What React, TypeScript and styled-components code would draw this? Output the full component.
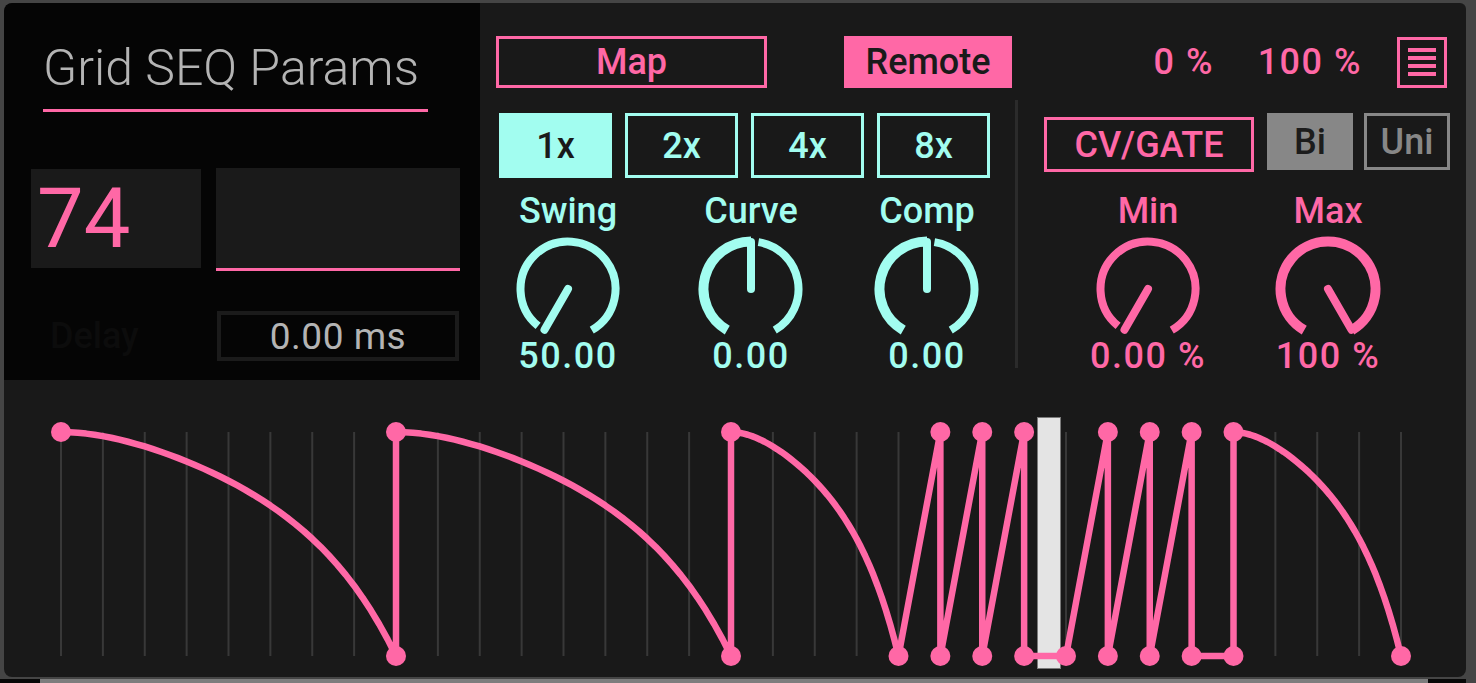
import styled, { createGlobalStyle } from 'styled-components'

const PINK = '#ff68a6'
const CYAN = '#a2fdf0'
const GREY = '#b4b4b4'
const PANEL = '#191919'

const GlobalStyle = createGlobalStyle`
  html, body {
    margin: 0;
    padding: 0;
    background: #454545;
  }
  body {
    font-family: Roboto, 'Liberation Sans', sans-serif;
  }
`

const Frame = styled.div`
  width: 1476px;
  height: 683px;
  overflow: hidden;
  padding-top: 3px;
  box-sizing: border-box;
  display: flex;
  flex-direction: column;
`

const Device = styled.div`
  margin-left: 4px;
  width: 1462px;
  height: 674px;
  background: ${PANEL};
  border-radius: 8px 6px 8px 8px;
  overflow: hidden;
  display: flex;
  flex-direction: column;
`

const TopRow = styled.div`
  display: flex;
  height: 377px;
`

/* ---------- left info panel ---------- */

const InfoPanel = styled.div`
  width: 476px;
  background: #050505;
  border-radius: 8px 0 0 0;
  box-sizing: border-box;
  padding: 37px 0 0 27px;
  display: flex;
  flex-direction: column;
`

const Title = styled.div`
  margin-left: 12px;
  font-weight: 300;
  font-size: 50px;
  line-height: 56px;
  color: ${GREY};
  white-space: nowrap;
`

const TitleRule = styled.div`
  margin: 13px 0 0 12px;
  width: 385px;
  height: 3px;
  background: ${PINK};
`

const ValueRow = styled.div`
  display: flex;
  align-items: flex-start;
  gap: 15px;
  margin-top: 56px;
`

const NumberBox = styled.div`
  margin-top: 1px;
  width: 170px;
  height: 99px;
  background: #1a1a1a;
  box-sizing: border-box;
  padding-left: 6px;
  color: ${PINK};
  font-size: 83px;
  line-height: 99px;
`

const LevelBox = styled.div`
  width: 244px;
  height: 100px;
  background: #1a1a1a;
  border-bottom: 3px solid ${PINK};
`

const DelayRow = styled.div`
  display: flex;
  align-items: center;
  margin-top: 40px;
`

const DelayLabel = styled.div`
  width: 186px;
  box-sizing: border-box;
  padding-left: 19px;
  font-size: 36px;
  font-weight: 500;
  color: #0c0c0c;
`

const TimeBox = styled.div`
  width: 242px;
  height: 50px;
  box-sizing: border-box;
  border: 4px solid #1b1b1b;
  background: #050505;
  display: flex;
  align-items: center;
  justify-content: center;
  font-size: 37px;
  letter-spacing: 0.5px;
  color: ${GREY};
`

/* ---------- controls ---------- */

const ControlsPanel = styled.div`
  flex: 1;
  display: flex;
  flex-direction: column;
`

const Header = styled.div`
  display: flex;
  align-items: center;
  margin-top: 33px;
  padding-left: 16px;
  height: 52px;
`

const Toggle = styled.div<{ $color: string; $on?: boolean; $w: number; $h: number; $text?: string }>`
  width: ${(p) => p.$w}px;
  height: ${(p) => p.$h}px;
  box-sizing: border-box;
  border: 3px solid ${(p) => p.$color};
  background: ${(p) => (p.$on ? p.$color : 'transparent')};
  color: ${(p) => p.$text ?? (p.$on ? '#1a1a1a' : p.$color)};
  display: flex;
  align-items: center;
  justify-content: center;
  font-size: 36px;
  font-weight: 500;
  flex-shrink: 0;
`

const Readout = styled.div<{ $w: number }>`
  width: ${(p) => p.$w}px;
  text-align: right;
  font-size: 36px;
  font-weight: 500;
  letter-spacing: 1.5px;
  color: ${PINK};
  flex-shrink: 0;
`

const MenuButton = styled.div`
  margin-left: 35px;
  width: 50px;
  height: 51px;
  box-sizing: border-box;
  border: 3px solid ${PINK};
  display: flex;
  flex-direction: column;
  align-items: center;
  justify-content: center;
  gap: 3.7px;
`

const MenuBar = styled.span`
  width: 28px;
  height: 4px;
  background: ${PINK};
`

const Body = styled.div`
  display: flex;
  margin-top: 12px;
  height: 268px;
`

const LeftColumn = styled.div`
  width: 535px;
  padding-top: 13px;
`

const Divider = styled.div`
  width: 3px;
  background: #2b2b2b;
`

const RightColumn = styled.div`
  flex: 1;
  padding: 13px 0 0 26px;
`

const RateRow = styled.div`
  display: flex;
  gap: 13px;
  margin-left: 19px;
`

const ModeRow = styled.div`
  display: flex;
  align-items: flex-start;
  height: 59px;
`

const KnobRow = styled.div<{ $cols: string; $top: number; $left?: number }>`
  display: grid;
  grid-template-columns: ${(p) => p.$cols};
  margin-top: ${(p) => p.$top}px;
  margin-left: ${(p) => p.$left ?? 0}px;
`

const KnobUnit = styled.div<{ $color: string }>`
  display: flex;
  flex-direction: column;
  align-items: center;
  color: ${(p) => p.$color};
  font-size: 36px;
  font-weight: 500;
  line-height: 40px;
`

const KnobLabel = styled.div`
  height: 40px;
`

const KnobValue = styled.div`
  margin-top: -2px;
  letter-spacing: 1.5px;
  white-space: nowrap;
`

const KnobSvg = styled.svg`
  display: block;
  margin-top: 3px;
`

const polar = (cx: number, cy: number, r: number, deg: number) => {
  const a = (deg * Math.PI) / 180
  return [cx + r * Math.sin(a), cy - r * Math.cos(a)]
}

const arc = (cx: number, cy: number, r: number, a0: number, a1: number) => {
  const [x0, y0] = polar(cx, cy, r, a0)
  const [x1, y1] = polar(cx, cy, r, a1)
  const large = a1 - a0 > 180 ? 1 : 0
  return `M${x0.toFixed(2)} ${y0.toFixed(2)} A${r} ${r} 0 ${large} 1 ${x1.toFixed(2)} ${y1.toFixed(2)}`
}

type KnobProps = { label: string; value: string; amount: number; color: string }

const Knob = ({ label, value, amount, color }: KnobProps) => {
  const cx = 55
  const cy = 55
  const r = 47.5
  const angle = -150 + 300 * amount
  const [nx, ny] = polar(cx, cy, 47, angle)
  return (
    <KnobUnit $color={color}>
      <KnobLabel>{label}</KnobLabel>
      <KnobSvg width={110} height={104} viewBox="0 0 110 104">
        {amount > 0 && <path d={arc(cx, cy, r, -150, angle)} fill="none" stroke={color} strokeWidth={10} />}
        {amount < 1 && <path d={arc(cx, cy, r, angle + 9, 150)} fill="none" stroke={color} strokeWidth={8} />}
        <line x1={cx} y1={cy} x2={nx} y2={ny} stroke={color} strokeWidth={8} strokeLinecap="round" />
      </KnobSvg>
      <KnobValue>{value}</KnobValue>
    </KnobUnit>
  )
}

/* ---------- step graph ---------- */

const GraphPanel = styled.div`
  flex: 1;
`

const GraphSvg = styled.svg`
  display: block;
`

const STEP_X0 = 57
const STEP_W = 41.875
const TOP = 52
const BOT = 276
const sx = (i: number) => STEP_X0 + i * STEP_W

// falling ramp between two steps, steepening towards the end
const ramp = (i0: number, i1: number) => {
  const pts: string[] = []
  for (let k = 1; k <= 40; k++) {
    const t = k / 40
    const f = Math.pow(t, 1.9 + 1.2 * t * t)
    const x = sx(i0) + (sx(i1) - sx(i0)) * t
    const y = TOP + (BOT - TOP) * f
    pts.push(`L${x.toFixed(2)} ${y.toFixed(2)}`)
  }
  return pts.join(' ')
}

const up = (i: number) => `L${sx(i)} ${TOP}`
const down = (i: number) => `L${sx(i)} ${BOT}`

const seqPath = [
  `M${sx(0)} ${TOP}`,
  ramp(0, 8),
  up(8),
  ramp(8, 16),
  up(16),
  ramp(16, 20),
  up(21), down(21),
  up(22), down(22),
  up(23), down(23),
  down(24),
  up(25), down(25),
  up(26), down(26),
  up(27), down(27),
  down(28), up(28),
  ramp(28, 32),
].join(' ')

const topDots = [0, 8, 16, 21, 22, 23, 25, 26, 27, 28]
const bottomDots = [8, 16, 20, 21, 22, 23, 24, 25, 26, 27, 28, 32]

const StepGraph = () => (
  <GraphSvg width={1462} height={297} viewBox="0 0 1462 297">
    {Array.from({ length: 33 }, (_, i) => (
      <line key={i} x1={sx(i)} y1={TOP} x2={sx(i)} y2={BOT} stroke="#383838" strokeWidth={2} />
    ))}
    <rect x={1033.5} y={37.5} width={23} height={251} fill="#e4e4e4" stroke="#7a7a7a" strokeWidth={1} />
    <path d={seqPath} fill="none" stroke={PINK} strokeWidth={6.5} strokeLinejoin="round" />
    {topDots.map((i) => (
      <circle key={`t${i}`} cx={sx(i)} cy={TOP} r={10} fill={PINK} />
    ))}
    {bottomDots.map((i) => (
      <circle key={`b${i}`} cx={sx(i)} cy={BOT} r={10} fill={PINK} />
    ))}
  </GraphSvg>
)

const BottomStrip = styled.div`
  margin-top: 2px;
  width: 1466px;
  height: 4px;
  background: #080808;
  display: flex;
`

const ScrollBar = styled.div`
  margin-left: 40px;
  width: 1388px;
  background: #7d7d7d;
`

export default function App() {
  return (
    <>
      <GlobalStyle />
      <Frame>
        <Device>
          <TopRow>
            <InfoPanel>
              <Title>Grid SEQ Params</Title>
              <TitleRule />
              <ValueRow>
                <NumberBox>74</NumberBox>
                <LevelBox />
              </ValueRow>
              <DelayRow>
                <DelayLabel>Delay</DelayLabel>
                <TimeBox>0.00 ms</TimeBox>
              </DelayRow>
            </InfoPanel>
            <ControlsPanel>
              <Header>
                <Toggle $color={PINK} $w={271} $h={52}>Map</Toggle>
                <Toggle $color={PINK} $on $w={168} $h={52} style={{ marginLeft: 77 }}>
                  Remote
                </Toggle>
                <Readout $w={202}>0 %</Readout>
                <Readout $w={148}>100 %</Readout>
                <MenuButton>
                  <MenuBar />
                  <MenuBar />
                  <MenuBar />
                  <MenuBar />
                </MenuButton>
              </Header>
              <Body>
                <LeftColumn>
                  <RateRow>
                    {['1x', '2x', '4x', '8x'].map((r, i) => (
                      <Toggle key={r} $color={CYAN} $on={i === 0} $w={113} $h={65}>
                        {r}
                      </Toggle>
                    ))}
                  </RateRow>
                  <KnobRow $cols="176px 190px 162px" $top={13}>
                    <Knob label="Swing" value="50.00" amount={0} color={CYAN} />
                    <Knob label="Curve" value="0.00" amount={0.5} color={CYAN} />
                    <Knob label="Comp" value="0.00" amount={0.5} color={CYAN} />
                  </KnobRow>
                </LeftColumn>
                <Divider />
                <RightColumn>
                  <ModeRow>
                    <Toggle $color={PINK} $w={210} $h={55} style={{ marginTop: 4 }}>
                      CV/GATE
                    </Toggle>
                    <Toggle $color="#878787" $on $w={86} $h={57} $text="#1c1c1c" style={{ marginLeft: 13 }}>
                      Bi
                    </Toggle>
                    <Toggle $color="#878787" $w={86} $h={57} style={{ marginLeft: 11 }}>
                      Uni
                    </Toggle>
                  </ModeRow>
                  <KnobRow $cols="180px 180px" $top={19} $left={14}>
                    <Knob label="Min" value="0.00 %" amount={0} color={PINK} />
                    <Knob label="Max" value="100 %" amount={1} color={PINK} />
                  </KnobRow>
                </RightColumn>
              </Body>
            </ControlsPanel>
          </TopRow>
          <GraphPanel>
            <StepGraph />
          </GraphPanel>
        </Device>
        <BottomStrip>
          <ScrollBar />
        </BottomStrip>
      </Frame>
    </>
  )
}
